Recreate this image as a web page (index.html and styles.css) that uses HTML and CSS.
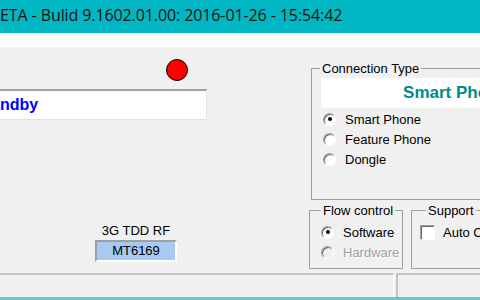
FILE: index.html
```html
<!DOCTYPE html>
<html lang="en">
<head>
    <meta charset="UTF-8">
    <title>Meta - Bulid 9.1602.01.00</title>
    <link rel="stylesheet" href="styles.css">
</head>
<body>
    <div class="titlebar">ETA - Bulid 9.1602.01.00: 2016-01-26 - 15:54:42</div>
    <div class="toolbar-gap"></div>

    <div class="main">
        <div class="left">
            <div class="led"></div>
            <div class="status"><span>Standby</span></div>

            <div class="rf">
                <div class="rf-label">3G TDD RF</div>
                <div class="rf-value">MT6169</div>
            </div>
        </div>

        <div class="right">
            <fieldset class="group conn">
                <legend>Connection Type</legend>
                <div class="conn-name">Smart Phone</div>
                <div class="opts">
                    <div class="opt"><span class="radio on"></span>Smart Phone</div>
                    <div class="opt"><span class="radio"></span>Feature Phone</div>
                    <div class="opt"><span class="radio"></span>Dongle</div>
                </div>
            </fieldset>

            <div class="row">
                <fieldset class="group flow">
                    <legend>Flow control</legend>
                    <div class="opt"><span class="radio on"></span>Software</div>
                    <div class="opt disabled"><span class="radio"></span>Hardware</div>
                </fieldset>

                <fieldset class="group support">
                    <legend>Support</legend>
                    <div class="opt"><span class="check"></span>Auto Connect</div>
                </fieldset>
            </div>
        </div>
    </div>

    <div class="statusbar">
        <div class="pane pane-main"></div>
        <div class="pane"></div>
    </div>
</body>
</html>
```

FILE: styles.css
```css
body {
    margin: 0;
    width: 480px;
    height: 300px;
    overflow: hidden;
    box-sizing: border-box;
    background-color: #f0f0f0;
    border-bottom: 3px solid #5ecbd1;
    font: 13px "Liberation Sans", Arial, sans-serif;
    color: #000;
}

.titlebar {
    height: 33px;
    background-color: #00b7c3;
    font: 16px "Open Sans", sans-serif;
    line-height: 31px;
    letter-spacing: -0.1px;
    color: #111;
    white-space: nowrap;
}

.toolbar-gap {
    height: 14px;
    background-color: #fff;
}

.main {
    display: flex;
    height: 226px;
}

.left {
    flex: none;
    width: 308px;
}

.led {
    width: 20px;
    height: 20px;
    margin: 12px 0 0 166px;
    border: 1px solid #000;
    border-radius: 50%;
    background-color: #f00;
}

.status {
    box-sizing: border-box;
    width: 237px;
    height: 31px;
    margin: 8px 0 0 -30px;
    padding-left: 5px;
    background-color: #fff;
    border-top: 2px solid #a0a0a0;
    border-right: 1px solid #e3e3e3;
    border-bottom: 1px solid #e3e3e3;
    line-height: 28px;
    font-size: 16px;
    font-weight: bold;
    color: #00f;
}

.rf {
    width: 82px;
    margin: 103px 0 0 95px;
    text-align: center;
}

.rf-label {
    line-height: 16px;
}

.rf-value {
    margin-top: 1px;
    line-height: 18px;
    background-color: #a6caf0;
    border: 2px solid;
    border-color: #a0a0a0 #fff #fff #a0a0a0;
}

.right {
    flex: none;
    width: 172px;
}

.group {
    flex: none;
    min-width: 0;
    margin: 0;
    border: 1px solid #a0a0a0;
}

.group legend {
    padding: 0 2px;
    line-height: 15px;
    white-space: nowrap;
}

.conn {
    width: 290px;
    margin: 14px 0 0 3px;
    padding: 0 0 30px 8px;
}

.conn-name {
    width: 269px;
    margin: 2px 0 0 1px;
    line-height: 30px;
    background-color: #fff;
    text-align: center;
    font-size: 17px;
    font-weight: bold;
    color: #008b8b;
}

.opts {
    margin-top: 1px;
    padding-left: 3px;
}

.opt {
    display: flex;
    align-items: center;
    height: 20px;
    white-space: nowrap;
}

.radio {
    box-sizing: border-box;
    display: grid;
    place-items: center;
    flex: none;
    width: 13px;
    height: 13px;
    margin-right: 9px;
    border: 1px solid;
    border-color: #a0a0a0 #fff #fff #a0a0a0;
    border-radius: 50%;
    background-color: #fff;
    box-shadow: inset 1px 1px 0 #696969;
}

.radio.on:after {
    content: "";
    width: 4px;
    height: 4px;
    border-radius: 50%;
    background-color: #000;
}

.disabled {
    color: #a0a0a0;
    text-shadow: 1px 1px 0 #fff;
}

.disabled .radio {
    background-color: #f0f0f0;
}

.row {
    display: flex;
    margin-top: 3px;
}

.flow {
    box-sizing: border-box;
    width: 94px;
    margin-left: 1px;
    padding: 4px 0 6px 11px;
}

.support {
    width: 120px;
    margin-left: 8px;
    padding: 4px 0 6px 8px;
}

.support legend {
    margin-left: 6px;
}

.check {
    box-sizing: border-box;
    flex: none;
    width: 15px;
    height: 15px;
    margin-right: 8px;
    border: 1px solid;
    border-color: #a0a0a0 #fff #fff #a0a0a0;
    background-color: #fff;
    box-shadow: inset 1px 1px 0 #696969;
}

.statusbar {
    display: flex;
    height: 24px;
}

.pane {
    flex: 1;
    border-top: 2px solid #c4c4c4;
    border-left: 2px solid #c4c4c4;
    margin-left: 2px;
}

.pane-main {
    flex: none;
    width: 393px;
    margin-left: 0;
    border-left: none;
    border-right: 1px solid #fff;
}
```
